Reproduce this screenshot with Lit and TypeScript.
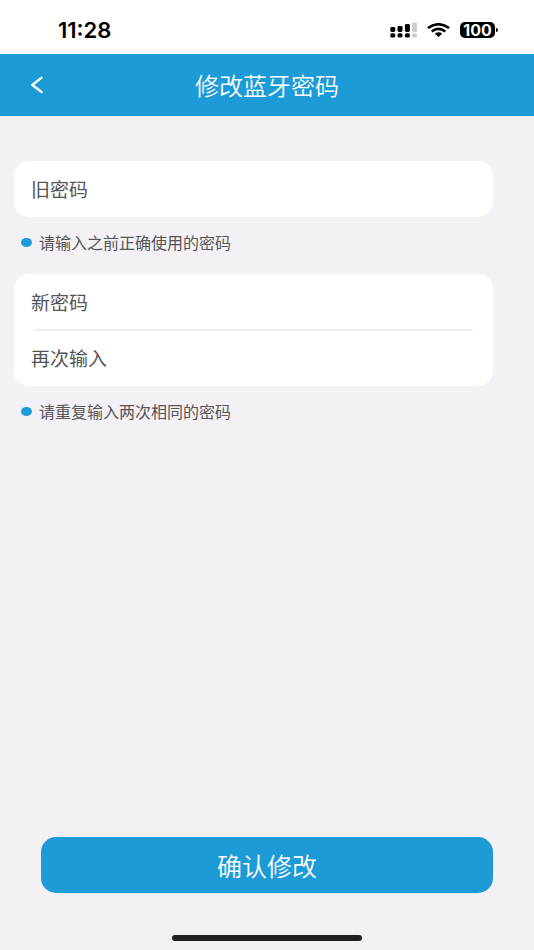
import { LitElement, html, css } from "lit";
import { customElement } from "lit/decorators.js";

const fontStack = css`"Noto Sans CJK SC", sans-serif`;

@customElement("status-bar")
class StatusBar extends LitElement {
  static styles = css`
    :host {
      display: flex;
      align-items: center;
      justify-content: space-between;
      box-sizing: border-box;
      height: 54px;
      padding: 6px 36px 0 58px;
      background: #fff;
      color: #000;
      font-family: Inter, sans-serif;
    }
    .time {
      font-size: 22px;
      line-height: 24px;
      font-weight: 600;
    }
    .icons {
      display: flex;
      align-items: center;
    }
    .signal {
      margin-right: 10px;
    }
    .wifi {
      margin-right: 10px;
    }
    .battery {
      display: flex;
      align-items: center;
    }
    .level {
      width: 35px;
      border-radius: 5px;
      background: #000;
      color: #fff;
      font-size: 16px;
      line-height: 16px;
      font-weight: 700;
      text-align: center;
    }
    .tip {
      width: 2px;
      height: 4px;
      margin-left: 1px;
      border-radius: 0 2px 2px 0;
      background: #000;
    }
  `;

  render() {
    return html`
      <span class="time">11:28</span>
      <div class="icons">
        <svg class="signal" width="27" height="16" viewBox="0 0 27 16" aria-hidden="true">
          <rect x="0.3" y="5" width="5" height="5" rx="1.4" />
          <rect x="7.5" y="4" width="5" height="6" rx="1.4" />
          <rect x="14.9" y="2" width="5" height="8" rx="1.4" />
          <rect x="22" y="0.4" width="5" height="9.6" rx="1.4" fill="#ccc" />
          <rect x="0.3" y="11.2" width="5" height="4.4" rx="1.6" />
          <rect x="7.5" y="11.2" width="5" height="4.4" rx="1.6" />
          <rect x="14.9" y="11.2" width="5" height="4.4" rx="1.6" />
          <rect x="22" y="11.2" width="5" height="4.4" rx="1.6" fill="#ccc" />
        </svg>
        <svg class="wifi" width="23" height="14" viewBox="0 0 23 14" aria-hidden="true">
          <g fill="none" stroke="#000" stroke-width="2.5">
            <path d="M.9 5Q11.5-2.6 22.1 5" />
            <path d="M4.7 8.4Q11.5 3.4 18.3 8.4" />
          </g>
          <path d="M7.8 10.7Q11.5 8 15.2 10.7L11.5 14Z" />
        </svg>
        <div class="battery">
          <span class="level">100</span>
          <span class="tip"></span>
        </div>
      </div>
    `;
  }
}

@customElement("app-root")
class AppRoot extends LitElement {
  static styles = css`
    :host {
      display: flex;
      flex-direction: column;
      min-height: 100vh;
      background: #f3f1f5;
      color: #555;
      font-family: ${fontStack};
    }
    .header {
      display: grid;
      grid-template-columns: 74px 1fr 74px;
      align-items: center;
      height: 62px;
      background: #1c9bd7;
      color: #fff;
    }
    .back {
      display: flex;
      align-items: center;
      justify-content: center;
      height: 62px;
      padding: 0;
      border: 0;
      background: none;
      color: inherit;
    }
    .title {
      margin: 0;
      font-size: 24px;
      line-height: 32px;
      font-weight: 350;
      text-align: center;
    }
    .form {
      display: flex;
      flex: 1;
      flex-direction: column;
      padding: 45px 41px 57px 14px;
    }
    .card {
      border-radius: 15px;
      background: #fff;
    }
    .field {
      display: flex;
      align-items: center;
      height: 56px;
      padding: 0 20px 0 17px;
      gap: 16px;
    }
    .label {
      font-size: 19px;
      line-height: 28px;
    }
    .input {
      flex: 1;
      min-width: 0;
      height: 40px;
      padding: 0;
      border: 0;
      outline: 0;
      background: none;
      color: inherit;
      font: inherit;
      font-size: 19px;
    }
    .divider {
      height: 2px;
      margin: -1px 20px;
      border: 0;
      background: #efeef0;
    }
    .hint {
      display: flex;
      align-items: center;
      gap: 7px;
      margin: 0 0 7px 7px;
      font-size: 16px;
      line-height: 50px;
    }
    .dot {
      width: 11px;
      height: 9px;
      border-radius: 50%;
      background: #1c9bd7;
    }
    .submit {
      height: 56px;
      margin: auto 0 0 27px;
      padding: 0;
      border: 0;
      border-radius: 15px;
      background: #1c9bd7;
      color: #fff;
      font-family: inherit;
      font-size: 25px;
      font-weight: 350;
      line-height: 32px;
    }
    .home {
      position: fixed;
      bottom: 9px;
      left: 50%;
      width: 190px;
      height: 6px;
      margin-left: -95px;
      border-radius: 3px;
      background: #222024;
    }
  `;

  private field(id: string, label: string) {
    return html`
      <div class="field">
        <label class="label" for=${id}>${label}</label>
        <input class="input" id=${id} type="password" />
      </div>
    `;
  }

  private hint(text: string) {
    return html`<div class="hint"><span class="dot"></span><span>${text}</span></div>`;
  }

  render() {
    return html`
      <status-bar></status-bar>
      <header class="header">
        <button class="back" type="button" aria-label="返回">
          <svg width="12" height="18" viewBox="0 0 12 18" fill="none" stroke="currentColor" stroke-width="2.3" stroke-linecap="round" stroke-linejoin="round" aria-hidden="true">
            <path d="M10.6 1.7L1.3 9l9.3 7" />
          </svg>
        </button>
        <h1 class="title">修改蓝牙密码</h1>
      </header>
      <form class="form">
        <div class="card">${this.field("old-password", "旧密码")}</div>
        ${this.hint("请输入之前正确使用的密码")}
        <div class="card">
          ${this.field("new-password", "新密码")}
          <hr class="divider" />
          ${this.field("repeat-password", "再次输入")}
        </div>
        ${this.hint("请重复输入两次相同的密码")}
        <button class="submit" type="button">确认修改</button>
      </form>
      <div class="home"></div>
    `;
  }
}
